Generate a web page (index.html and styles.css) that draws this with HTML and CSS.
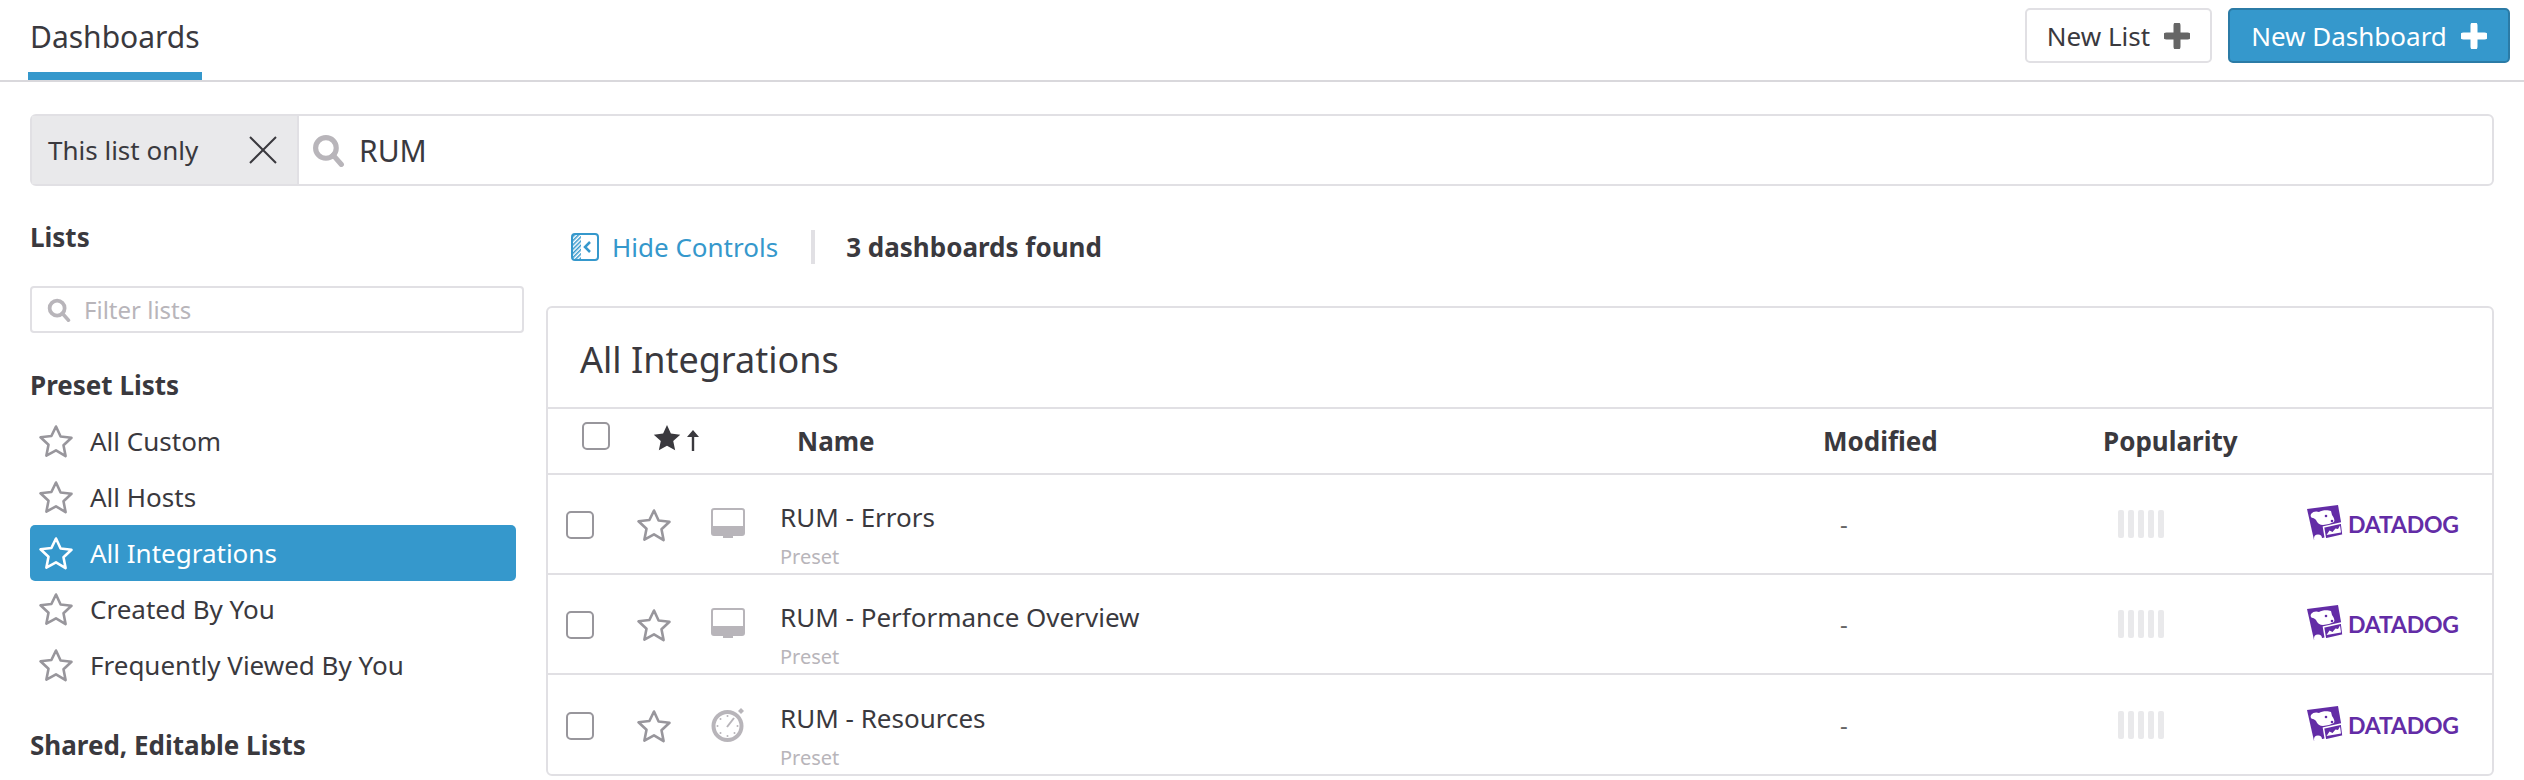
FILE: index.html
```html
<!DOCTYPE html>
<html lang="en">
<head>
<meta charset="utf-8">
<title>Dashboards</title>
<link rel="stylesheet" href="styles.css">
</head>
<body>
<svg class="defs" width="0" height="0" aria-hidden="true">
  <defs>
    <symbol id="star" viewBox="0 0 36 34"><path d="M18 2.500l4.600 10 10.900 1.300-8 7.500 2.100 10.800L18 26.300 8.400 31.600l2.100-10.800-8-7.500 10.900-1.300z" fill="none" stroke="currentColor" stroke-width="2.600" stroke-linejoin="round"/></symbol>
    <symbol id="search" viewBox="0 0 32 32"><circle cx="13.500" cy="13.500" r="10" fill="none" stroke="currentColor" stroke-width="5"/><path d="M20.500 20.500l8 9" stroke="currentColor" stroke-width="5" stroke-linecap="round"/></symbol>
    <symbol id="plus" viewBox="0 0 26 26"><path d="M13 2.500v21M2.500 13h21" stroke="currentColor" stroke-width="7" stroke-linecap="round"/></symbol>
    <symbol id="monitor" viewBox="0 0 34 30"><path d="M3 1h28a2 2 0 0 1 2 2v22a2 2 0 0 1-2 2H3a2 2 0 0 1-2-2V3a2 2 0 0 1 2-2z" fill="#fff" stroke="#b8b5ba" stroke-width="2"/><path d="M1 18h32v7a2 2 0 0 1-2 2H3a2 2 0 0 1-2-2z" fill="#b8b5ba"/><rect x="12" y="26" width="10" height="4" fill="#b8b5ba"/></symbol>
    <symbol id="watch" viewBox="0 0 34 36"><path d="M27 5l3-3 3 3-3 3z" fill="#b8b5ba"/><circle cx="16.500" cy="20" r="14" fill="#fff" stroke="#b8b5ba" stroke-width="4"/><path d="M16 21l7-9" stroke="#b8b5ba" stroke-width="2"/><g fill="#b8b5ba"><circle cx="16.500" cy="10" r="1"/><circle cx="16.500" cy="30" r="1"/><circle cx="6.500" cy="20" r="1"/><circle cx="26.500" cy="20" r="1"/><circle cx="9.500" cy="13" r="1"/><circle cx="23.500" cy="27" r="1"/><circle cx="9.500" cy="27" r="1"/></g></symbol>
    <symbol id="dog" viewBox="0 0 36 38"><path d="M0 4L31 0l5 28-29 7z" fill="#632ca6"/><path d="M4 9c2-3 6-3 8-2 3-2 9-2 12-1l1 4c2 3 3 5 2 7l-5 2-6 1c-3 0-6-2-7-5-1-1-2-2-3-2-2 0-3-2-2-4z" fill="#fff"/><circle cx="19" cy="11" r="1.300" fill="#632ca6"/><circle cx="25" cy="16" r="1.300" fill="#632ca6"/><path d="M16.500 22l18-4 1.500 12-17.500 4z" fill="#632ca6" stroke="#fff" stroke-width="1.500"/><path d="M19.500 30l3-4.500 3 1.500 3-3.500 2.500.5 2-3.500 1 7z" fill="#fff"/><circle cx="11" cy="33.500" r="4" fill="#fff"/></symbol>
    <pattern id="hatch" width="3" height="3" patternUnits="userSpaceOnUse" patternTransform="rotate(45)"><rect width="1.500" height="3" fill="#3598cc"/></pattern>
  </defs>
</svg>

<header class="topbar">
  <div class="tab">Dashboards</div>
  <div class="actions">
    <button class="btn btn-plain">New List <svg class="plus"><use href="#plus"/></svg></button>
    <button class="btn btn-primary">New Dashboard <svg class="plus"><use href="#plus"/></svg></button>
  </div>
</header>

<div class="searchbar">
  <div class="chip"><span>This list only</span>
    <svg class="chip-x" viewBox="0 0 28 28"><path d="M1 1l26 26M27 1L1 27" stroke="#3a393e" stroke-width="2"/></svg>
  </div>
  <div class="query">
    <svg class="query-icon"><use href="#search"/></svg>
    <span>RUM</span>
  </div>
</div>

<main class="layout">
  <aside class="sidebar">
    <h3 class="side-title">Lists</h3>
    <div class="filter"><svg class="filter-icon"><use href="#search"/></svg><span>Filter lists</span></div>
    <h3 class="side-title side-preset">Preset Lists</h3>
    <ul class="lists">
      <li class="list-item"><svg class="star"><use href="#star"/></svg>All Custom</li>
      <li class="list-item"><svg class="star"><use href="#star"/></svg>All Hosts</li>
      <li class="list-item active"><svg class="star"><use href="#star"/></svg>All Integrations</li>
      <li class="list-item"><svg class="star"><use href="#star"/></svg>Created By You</li>
      <li class="list-item"><svg class="star"><use href="#star"/></svg>Frequently Viewed By You</li>
    </ul>
    <h3 class="side-title side-shared">Shared, Editable Lists</h3>
  </aside>

  <section class="content">
    <div class="controls">
      <svg class="hide-icon" viewBox="0 0 28 28"><rect x="1" y="1" width="26" height="26" rx="3" fill="#fff" stroke="#3598cc" stroke-width="2"/><rect x="2" y="2" width="8" height="24" fill="url(#hatch)"/><path d="M19 9l-5 5 5 5" fill="none" stroke="#3598cc" stroke-width="2.500"/></svg>
      <span class="hide-label">Hide Controls</span>
      <span class="sep"></span>
      <strong class="found">3 dashboards found</strong>
    </div>
    <div class="card">
      <h2 class="card-title">All Integrations</h2>
      <div class="thead">
        <span class="check"></span>
        <span class="sort"><svg class="sort-star" viewBox="0 0 36 34"><path d="M18 1l5 11 12 1.500-9 8 2.500 12L18 27.500 7.500 33.500l2.500-12-9-8L13 12z" fill="#3a393e"/></svg><svg class="sort-arrow" viewBox="0 0 12 21"><path d="M6 0l6 7H7.200v14H4.800V7H0z" fill="#3a393e"/></svg></span>
        <span>Name</span>
        <span>Modified</span>
        <span>Popularity</span>
      </div>
      <div class="row">
        <span class="check"></span>
        <svg class="star"><use href="#star"/></svg>
        <svg class="type-monitor"><use href="#monitor"/></svg>
        <div class="title-cell"><div class="name">RUM - Errors</div><div class="preset">Preset</div></div>
        <span class="modified">-</span>
        <div class="bars"><i></i><i></i><i></i><i></i><i></i></div>
        <div class="logo"><svg class="dog"><use href="#dog"/></svg><span>DATADOG</span></div>
      </div>
      <div class="row">
        <span class="check"></span>
        <svg class="star"><use href="#star"/></svg>
        <svg class="type-monitor"><use href="#monitor"/></svg>
        <div class="title-cell"><div class="name">RUM - Performance Overview</div><div class="preset">Preset</div></div>
        <span class="modified">-</span>
        <div class="bars"><i></i><i></i><i></i><i></i><i></i></div>
        <div class="logo"><svg class="dog"><use href="#dog"/></svg><span>DATADOG</span></div>
      </div>
      <div class="row">
        <span class="check"></span>
        <svg class="star"><use href="#star"/></svg>
        <svg class="type-watch"><use href="#watch"/></svg>
        <div class="title-cell"><div class="name">RUM - Resources</div><div class="preset">Preset</div></div>
        <span class="modified">-</span>
        <div class="bars"><i></i><i></i><i></i><i></i><i></i></div>
        <div class="logo"><svg class="dog"><use href="#dog"/></svg><span>DATADOG</span></div>
      </div>
    </div>
  </section>
</main>
</body>
</html>
```
FILE: styles.css
```css
* { box-sizing: border-box; }
html, body { margin: 0; padding: 0; }
body {
  width: 2524px;
  height: 780px;
  overflow: hidden;
  background: #fff;
  color: #3a393e;
  font-family: "Noto Sans", "Open Sans", sans-serif;
  font-size: 26px;
}
.defs { position: absolute; }

.topbar {
  height: 82px;
  border-bottom: 2px solid #d9d8dc;
  padding: 0 14px 0 28px;
  display: flex;
  justify-content: space-between;
}
.tab {
  width: 174px;
  height: 80px;
  border-bottom: 8px solid #3598cc;
  padding: 17px 0 0 2px;
  font-size: 30px;
  line-height: 40px;
}
.actions { display: flex; gap: 16px; padding-top: 8px; }
.btn {
  height: 55px;
  border-radius: 5px;
  font: inherit;
  font-size: 26px;
  display: flex;
  align-items: center;
  justify-content: center;
  gap: 14px;
  padding: 0;
}
.btn-plain { width: 187px; background: #fff; border: 2px solid #e1e0e4; color: #3a393e; }
.btn-primary { width: 282px; background: #3598cc; border: 2px solid #2b7ba6; color: #fff; }
.plus { width: 26px; height: 26px; }
.btn-plain .plus { color: #666; }

.searchbar {
  margin: 32px 30px 0;
  height: 72px;
  border: 2px solid #e1e0e4;
  border-radius: 6px;
  display: flex;
}
.chip {
  width: 267px;
  background: #e9e9eb;
  border-right: 2px solid #e1e0e4;
  display: flex;
  align-items: center;
  justify-content: space-between;
  padding: 0 20px 0 16px;
  font-size: 26px;
}
.chip-x { width: 28px; height: 28px; }
.query { display: flex; align-items: center; gap: 14px; padding-left: 13px; font-size: 30px; }
.query-icon { width: 33px; height: 33px; color: #b8b5ba; }

.layout { display: flex; }
.sidebar { width: 546px; padding-left: 30px; flex: none; }
.side-title { margin: 0; font-size: 26px; line-height: 34px; font-weight: 700; }
.sidebar > .side-title:first-child { margin-top: 34px; }
.filter {
  width: 494px;
  height: 47px;
  margin-top: 32px;
  border: 2px solid #e1e0e4;
  border-radius: 4px;
  display: flex;
  align-items: center;
  gap: 13px;
  padding-left: 15px;
  color: #b8b5ba;
  font-size: 24px;
}
.filter-icon { width: 24px; height: 24px; color: #b8b5ba; }
.side-preset { margin-top: 35px; }
.lists { list-style: none; margin: 11px 0 0; padding: 0; }
.list-item {
  width: 486px;
  height: 56px;
  border-radius: 5px;
  display: flex;
  align-items: center;
  gap: 16px;
  padding-left: 8px;
  font-size: 26px;
}
.star { width: 36px; height: 34px; color: #98969c; flex: none; }
.list-item.active { background: #3598cc; color: #fff; }
.active .star { color: #fff; }
.side-shared { margin-top: 35px; }

.content { width: 1948px; }
.controls { display: flex; align-items: center; height: 72px; margin-top: 25px; padding-left: 25px; }
.hide-icon { width: 28px; height: 28px; flex: none; }
.hide-label { color: #3598cc; font-size: 26px; margin-left: 13px; }
.sep { width: 4px; height: 34px; background: #e1e0e4; margin-left: 33px; }
.found { font-size: 26px; font-weight: 700; margin-left: 31px; }

.card {
  margin-top: 23px;
  height: 470px;
  border: 2px solid #e1e0e4;
  border-radius: 6px;
}
.card-title {
  margin: 0;
  height: 101px;
  padding-left: 32px;
  font-size: 36px;
  font-weight: 400;
  line-height: 103px;
  border-bottom: 2px solid #e1e0e4;
}
.thead {
  height: 66px;
  border-bottom: 2px solid #e1e0e4;
  display: grid;
  grid-template-columns: 71px 144px 1026px 280px 1fr;
  padding-left: 34px;
  align-items: center;
  font-weight: 700;
  font-size: 26px;
}
.thead .check { margin-top: -10px; }
.sort { display: flex; align-items: flex-start; gap: 6px; margin-top: -7px; }
.sort-star { width: 28px; height: 27px; }
.sort-arrow { width: 12px; height: 21px; margin-top: 6px; }
.check {
  width: 28px;
  height: 28px;
  border: 2px solid #98969c;
  border-radius: 5px;
  display: block;
}
.row {
  height: 100px;
  border-bottom: 2px solid #e1e0e4;
  display: grid;
  grid-template-columns: 70px 75px 70px 1042px 280px 204px 1fr;
  padding-left: 18px;
  align-items: center;
}
.row:last-child { border-bottom: 0; }
.row .check, .row .star { margin-top: 2px; }
.type-monitor { width: 34px; height: 30px; margin-top: -2px; }
.type-watch { width: 34px; height: 36px; margin-top: -2px; }
.title-cell { height: 98px; padding-top: 26px; margin-left: -1px; }
.name { font-size: 26px; line-height: 33px; }
.preset { font-size: 20px; line-height: 26px; color: #b8b5ba; margin-top: 10px; }
.modified { padding-left: 17px; color: #666; font-size: 24px; margin-top: -2px; }
.bars { display: flex; gap: 4px; padding-left: 15px; }
.bars i { width: 6px; height: 28px; border-radius: 2px; background: #e9e9eb; display: block; }
.logo { display: flex; align-items: center; gap: 5px; color: #632ca6; font-family: "Lato", sans-serif; font-weight: 700; font-size: 23px; letter-spacing: -0.2px; }
.dog { width: 36px; height: 38px; flex: none; }
```
